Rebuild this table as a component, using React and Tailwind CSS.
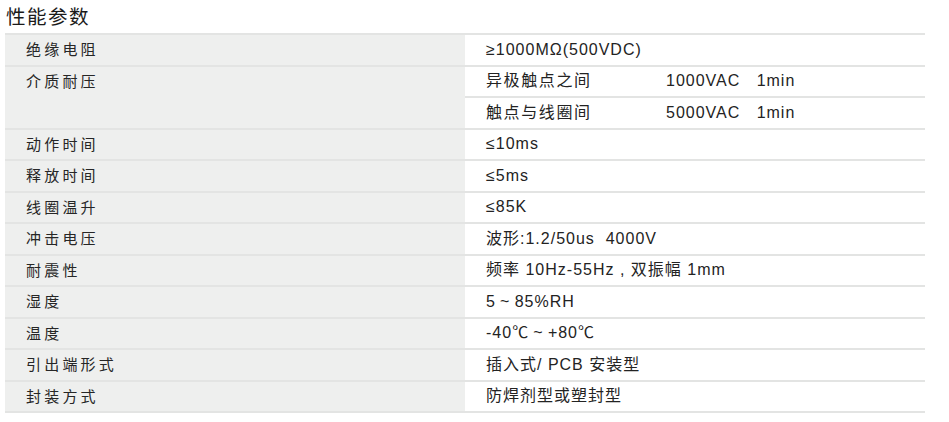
import React from "react";

const rows = [
  { label: "绝缘电阻", values: [["≥1000MΩ(500VDC)"]] },
  {
    label: "介质耐压",
    values: [
      ["异极触点之间", "1000VAC   1min"],
      ["触点与线圈间", "5000VAC   1min"],
    ],
  },
  { label: "动作时间", values: [["≤10ms"]] },
  { label: "释放时间", values: [["≤5ms"]] },
  { label: "线圈温升", values: [["≤85K"]] },
  { label: "冲击电压", values: [["波形:1.2/50us  4000V"]] },
  { label: "耐震性", values: [["频率 10Hz-55Hz , 双振幅 1mm"]] },
  { label: "湿度", values: [["5\u2009~\u200985%RH"]] },
  { label: "温度", values: [["-40℃\u2009~\u2009+80℃"]] },
  { label: "引出端形式", values: [["插入式/ PCB 安装型"]] },
  { label: "封装方式", values: [["防焊剂型或塑封型"]] },
];

const font = {
  fontFamily: '"Liberation Sans", "Noto Sans CJK SC", sans-serif',
};

export default function App() {
  return (
    <div
      className="w-[949px] h-[422px] bg-white text-[#232323]"
      style={font}
    >
      <div className="h-[33px] pl-[6px] pt-[5px] text-[19.5px] leading-[24px] tracking-[1.5px] text-[#1a1a1a]">
        性能参数
      </div>
      <div className="ml-[5px] w-[920px] border-t-2 border-[#e3e4e3]">
        {rows.map((r) => (
          <div key={r.label} className="flex border-b-2 border-[#e3e4e3]">
            <div className="w-[460px] shrink-0 bg-[#eeefee] pl-[21px] pt-[6px] text-[15px] leading-[18px] tracking-[3.2px] text-[#262626]">
              {r.label}
            </div>
            <div className="flex-1 flex flex-col">
              {r.values.map((v, i) => (
                <div
                  key={i}
                  className={
                    "h-[29.5px] flex items-center pl-[21px] text-[16px] tracking-[1px] whitespace-pre " +
                    (i < r.values.length - 1
                      ? "border-b-2 border-[#e3e4e3] h-[31.5px]"
                      : "")
                  }
                >
                  {v.length === 2 ? (
                    <>
                      <span className="w-[180px] tracking-[1.6px]">{v[0]}</span>
                      <span>{v[1]}</span>
                    </>
                  ) : (
                    <span>{v[0]}</span>
                  )}
                </div>
              ))}
            </div>
          </div>
        ))}
      </div>
    </div>
  );
}
